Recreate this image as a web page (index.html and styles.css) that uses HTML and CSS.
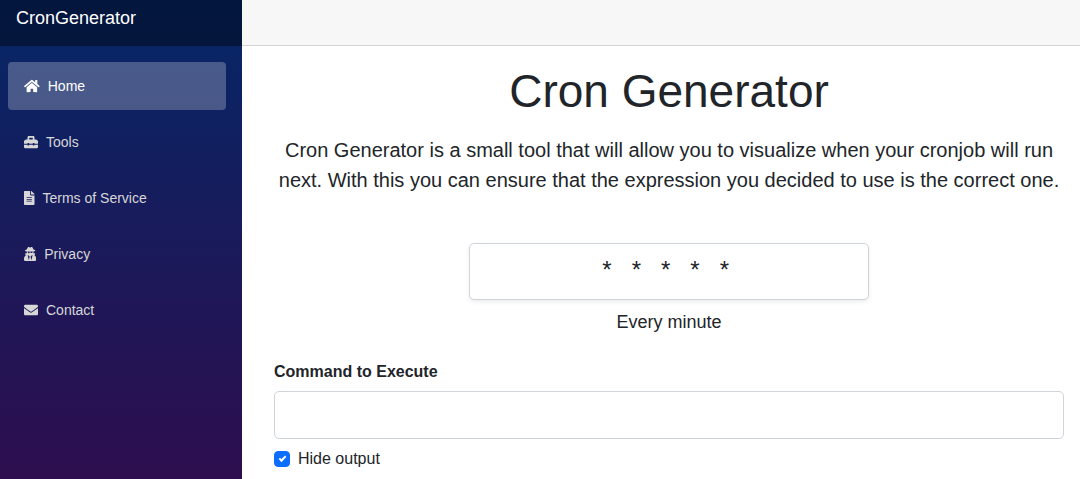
FILE: index.html
```html
<!DOCTYPE html>
<html lang="en">
<head>
    <meta charset="UTF-8">
    <meta name="viewport" content="width=device-width, initial-scale=1.0">
    <title>Cron Generator</title>
    <link rel="stylesheet" href="styles.css">
</head>
<body>
    <div class="page">
        <!-- Sidebar -->
        <div class="sidebar">
            <div class="top-row brand-row">
                <a class="brand" href="#">CronGenerator</a>
            </div>
            <nav class="nav">
                <a class="nav-link active" href="#">
                    <svg class="icon" viewBox="0 0 576 512" aria-hidden="true"><path d="M280.37 148.26L96 300.11V464a16 16 0 0 0 16 16l112.06-.29a16 16 0 0 0 15.92-16V368a16 16 0 0 1 16-16h64a16 16 0 0 1 16 16v95.64a16 16 0 0 0 16 16.05L464 480a16 16 0 0 0 16-16V300L295.67 148.26a12.19 12.19 0 0 0-15.3 0zM571.6 251.47L488 182.56V44.05a12 12 0 0 0-12-12h-56a12 12 0 0 0-12 12v72.61L318.47 43a48 48 0 0 0-61 0L4.34 251.47a12 12 0 0 0-1.6 16.9l25.5 31A12 12 0 0 0 45.15 301l235.22-193.74a12.19 12.19 0 0 1 15.3 0L530.9 301a12 12 0 0 0 16.9-1.6l25.5-31a12 12 0 0 0-1.7-16.93z"/></svg>
                    <span>Home</span>
                </a>
                <a class="nav-link" href="#">
                    <svg class="icon" viewBox="0 0 512 512" aria-hidden="true"><path d="M502.63 214.63l-45.25-45.25c-6-6-14.14-9.37-22.63-9.37H384V80c0-26.51-21.49-48-48-48H176c-26.51 0-48 21.49-48 48v80H77.25c-8.49 0-16.62 3.37-22.63 9.37L9.37 214.63c-6 6-9.37 14.14-9.37 22.63V320h128v-16c0-8.84 7.16-16 16-16h32c8.84 0 16 7.16 16 16v16h128v-16c0-8.84 7.16-16 16-16h32c8.84 0 16 7.16 16 16v16h128v-82.75c0-8.48-3.37-16.62-9.37-22.62zM320 160H192V96h128v64zm64 208c0 8.84-7.16 16-16 16h-32c-8.84 0-16-7.16-16-16v-16H192v16c0 8.84-7.16 16-16 16h-32c-8.84 0-16-7.16-16-16v-16H0v96c0 17.67 14.33 32 32 32h448c17.67 0 32-14.33 32-32v-96H384v16z"/></svg>
                    <span>Tools</span>
                </a>
                <a class="nav-link" href="#">
                    <svg class="icon" viewBox="0 0 384 512" aria-hidden="true"><path d="M224 136V0H24C10.7 0 0 10.7 0 24v464c0 13.3 10.7 24 24 24h336c13.3 0 24-10.7 24-24V160H248c-13.2 0-24-10.8-24-24zm64 236c0 6.6-5.4 12-12 12H108c-6.6 0-12-5.4-12-12v-8c0-6.6 5.4-12 12-12h168c6.6 0 12 5.4 12 12v8zm0-64c0 6.6-5.4 12-12 12H108c-6.6 0-12-5.4-12-12v-8c0-6.6 5.4-12 12-12h168c6.6 0 12 5.4 12 12v8zm0-72v8c0 6.6-5.4 12-12 12H108c-6.6 0-12-5.4-12-12v-8c0-6.6 5.4-12 12-12h168c6.6 0 12 5.4 12 12zm96-114.1v6.1H256V0h6.1c6.4 0 12.5 2.5 17 7l97.9 98c4.5 4.5 7 10.6 7 16.9z"/></svg>
                    <span>Terms of Service</span>
                </a>
                <a class="nav-link" href="#">
                    <svg class="icon" viewBox="0 0 448 512" aria-hidden="true"><path d="M383.9 308.3l23.9-62.6c4-10.5-3.7-21.7-15-21.7h-58.5c11-18.9 17.8-40.6 17.8-64v-.3c39.2-7.8 64-19.1 64-31.7 0-13.3-27.3-25.1-70.1-33-9.2-32.8-27-65.8-40.6-82.8-9.5-11.9-25.9-15.6-39.5-8.8l-27.6 13.8c-9 4.5-19.6 4.5-28.6 0L182.1 3.4c-13.6-6.8-30-3.1-39.5 8.8-13.5 17-31.4 50-40.6 82.8-42.7 7.9-70 19.7-70 33 0 12.6 24.8 23.9 64 31.7v.3c0 23.4 6.8 45.1 17.8 64H56.3c-11.5 0-19.2 11.7-14.7 22.3l25.8 60.2C27.3 329.8 0 372.7 0 422.4v44.8C0 491.9 20.1 512 44.8 512h358.4c24.7 0 44.8-20.1 44.8-44.8v-44.8c0-48.4-25.8-90.4-64.1-114.1zM176 480l-41.6-192 49.6 32 24 40-32 120zm96 0l-32-120 24-40 49.6-32L272 480zm41.7-298.5c-3.9 11.9-7 24.6-16.5 33.4-10.1 9.3-48 22.4-64-25-2.8-8.4-15.4-8.4-18.3 0-17 50.2-56 32.4-64 25-9.5-8.8-12.7-21.5-16.5-33.4-.8-2.5-6.3-5.7-6.3-5.8v-10.8c28.3 3.6 61 5.8 96 5.8s67.7-2.1 96-5.8v10.8c-.1.1-5.6 3.2-6.4 5.8z"/></svg>
                    <span>Privacy</span>
                </a>
                <a class="nav-link" href="#">
                    <svg class="icon" viewBox="0 0 512 512" aria-hidden="true"><path d="M502.3 190.8c3.9-3.1 9.7-.2 9.7 4.7V400c0 26.5-21.5 48-48 48H48c-26.5 0-48-21.5-48-48V195.6c0-5 5.7-7.8 9.7-4.7 22.4 17.4 52.1 39.5 154.1 113.6 21.1 15.4 56.7 47.8 92.2 47.6 35.7.3 72-32.8 92.3-47.6 102-74.1 131.6-96.3 154-113.7zM256 320c23.2.4 56.6-29.2 73.4-41.4 132.7-96.3 142.8-104.7 173.4-128.7 5.8-4.5 9.2-11.5 9.2-18.9v-19c0-26.5-21.5-48-48-48H48c-26.5 0-48 21.5-48 48v19c0 7.4 3.4 14.3 9.2 18.9 30.6 23.9 40.7 32.4 173.4 128.7 16.8 12.2 50.2 41.8 73.4 41.4z"/></svg>
                    <span>Contact</span>
                </a>
            </nav>
        </div>

        <!-- Main content -->
        <div class="main">
            <div class="top-row"></div>
            <main class="content">
                <h1>Cron Generator</h1>
                <p class="lead">Cron Generator is a small tool that will allow you to visualize when your cronjob will run next. With this you can ensure that the expression you decided to use is the correct one.</p>

                <form>
                    <input class="form-control expression" type="text" aria-label="Cron expression" value="*   *   *   *   * ">
                    <p class="description">Every minute</p>

                    <label class="form-label" for="command">Command to Execute</label>
                    <input class="form-control" type="text" id="command">

                    <div class="form-check">
                        <input class="check-input" type="checkbox" id="hide-output" checked>
                        <label for="hide-output">Hide output</label>
                    </div>
                </form>
            </main>
        </div>
    </div>
</body>
</html>
```
FILE: styles.css
```css
* {
    box-sizing: border-box;
}
body {
    margin: 0;
    background-color: #fff;
    color: #212529;
    font-family: "Liberation Sans", Arial, sans-serif;
    font-size: 16px;
    line-height: 24px;
}
.page {
    display: flex;
    min-height: 100vh;
}

/* Sidebar */
.sidebar {
    flex: 0 0 242px;
    background-image: linear-gradient(180deg, rgb(5, 39, 103) 0%, #3a0647 130%);
}
.top-row {
    height: 46px;
    background-color: #f7f7f7;
    border-bottom: 1px solid #d6d5d5;
}
.brand-row {
    padding: 4px 16px;
    background-color: rgba(0, 0, 0, 0.4);
    border-bottom: none;
}
.brand {
    color: #fff;
    font-size: 18px;
    line-height: 28px;
    text-decoration: none;
}
.nav {
    display: flex;
    flex-direction: column;
    gap: 8px;
    padding: 16px 16px 16px 8px;
}
.nav-link {
    display: flex;
    align-items: center;
    gap: 8px;
    height: 48px;
    padding: 0 16px;
    border-radius: 4px;
    color: #d7d7d7;
    font-size: 14px;
    text-decoration: none;
}
.nav-link:hover {
    background-color: rgba(255, 255, 255, 0.1);
    color: #fff;
}
.nav-link.active {
    background-color: rgba(255, 255, 255, 0.25);
    color: #fff;
}
.icon {
    height: 14px;
    fill: currentColor;
}

/* Main content */
.main {
    flex: 1;
    min-width: 0;
}
.content {
    padding: 17px 16px 0 32px;
}
h1 {
    margin: 0 0 16px;
    font-size: 46px;
    font-weight: 400;
    line-height: 56px;
    text-align: center;
}
.lead {
    margin: 0 0 48px;
    font-size: 20px;
    line-height: 30px;
    text-align: center;
}
.form-control {
    display: block;
    width: 100%;
    height: 48px;
    padding: 8px 16px;
    border: 1px solid #ced4da;
    border-radius: 5px;
    background-color: #fff;
    color: #212529;
    font-family: inherit;
    font-size: 20px;
}
.expression {
    max-width: 400px;
    height: 57px;
    margin: 0 auto 8px;
    padding: 6px 16px 10px;
    box-shadow: 0 2px 4px rgba(0, 0, 0, 0.075);
    font-size: 24px;
    text-align: center;
}
.description {
    margin: 0 0 24px;
    font-size: 18px;
    line-height: 28px;
    text-align: center;
}
.form-label {
    display: block;
    margin-bottom: 7px;
    font-weight: 700;
}
.form-check {
    display: flex;
    align-items: center;
    gap: 8px;
    padding: 8px 0;
}
.check-input {
    display: grid;
    place-items: center;
    appearance: none;
    width: 16px;
    height: 16px;
    margin: 0;
    border: 1px solid #bfbfbf;
    border-radius: 4px;
}
.check-input:checked {
    border-color: #0d6efd;
    background-color: #0d6efd;
}
.check-input:checked::before {
    content: "";
    width: 5px;
    height: 2px;
    margin-bottom: 2px;
    border-bottom: 2px solid #fff;
    border-left: 2px solid #fff;
    transform: rotate(-45deg);
}
```
